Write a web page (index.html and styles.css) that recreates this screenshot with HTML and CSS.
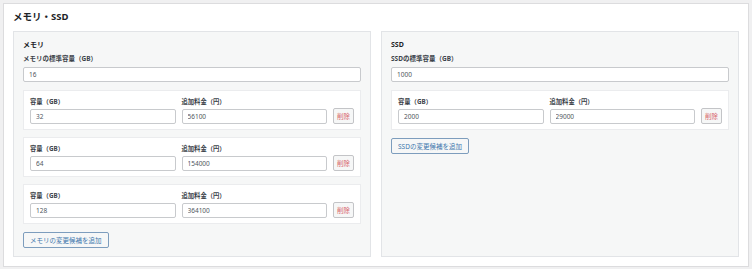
FILE: index.html
```html
<!DOCTYPE html>
<html lang="ja">
<head>
    <meta charset="UTF-8">
    <title>メモリ・SSD</title>
    <link rel="stylesheet" href="styles.css">
</head>
<body>
    <section class="postbox">
        <h2 class="postbox-title">メモリ・SSD</h2>

        <div class="panels">
            <div class="panel">
                <h3 class="panel-title">メモリ</h3>
                <label class="field-label" for="mem-default">メモリの標準容量（GB）</label>
                <input class="text-input" id="mem-default" type="text" value="16">

                <div class="option-list">
                    <div class="option-row">
                        <div class="field">
                            <label class="field-label">容量（GB）</label>
                            <input class="text-input" type="text" value="32">
                        </div>
                        <div class="field">
                            <label class="field-label">追加料金（円）</label>
                            <input class="text-input" type="text" value="56100">
                        </div>
                        <button class="btn-delete" type="button">削除</button>
                    </div>
                    <div class="option-row">
                        <div class="field">
                            <label class="field-label">容量（GB）</label>
                            <input class="text-input" type="text" value="64">
                        </div>
                        <div class="field">
                            <label class="field-label">追加料金（円）</label>
                            <input class="text-input" type="text" value="154000">
                        </div>
                        <button class="btn-delete" type="button">削除</button>
                    </div>
                    <div class="option-row">
                        <div class="field">
                            <label class="field-label">容量（GB）</label>
                            <input class="text-input" type="text" value="128">
                        </div>
                        <div class="field">
                            <label class="field-label">追加料金（円）</label>
                            <input class="text-input" type="text" value="364100">
                        </div>
                        <button class="btn-delete" type="button">削除</button>
                    </div>
                </div>

                <button class="btn-add" type="button">メモリの変更候補を追加</button>
            </div>

            <div class="panel">
                <h3 class="panel-title">SSD</h3>
                <label class="field-label" for="ssd-default">SSDの標準容量（GB）</label>
                <input class="text-input" id="ssd-default" type="text" value="1000">

                <div class="option-list">
                    <div class="option-row">
                        <div class="field">
                            <label class="field-label">容量（GB）</label>
                            <input class="text-input" type="text" value="2000">
                        </div>
                        <div class="field">
                            <label class="field-label">追加料金（円）</label>
                            <input class="text-input" type="text" value="29000">
                        </div>
                        <button class="btn-delete" type="button">削除</button>
                    </div>
                </div>

                <button class="btn-add" type="button">SSDの変更候補を追加</button>
            </div>
        </div>
    </section>
</body>
</html>
```

FILE: styles.css
```css
:root {
    --page-bg: #f0f0f1;
    --card-border: #dcdcde;
    --panel-bg: #f6f7f7;
    --panel-border: #e2e4e7;
    --row-border: #ebecee;
    --input-border: #c8cacd;
    --text-dark: #1d2327;
    --text-label: #3c434a;
    --text-value: #50575e;
    --blue: #3f78ad;
    --red: #d6636a;
}

* {
    margin: 0;
    padding: 0;
    box-sizing: border-box;
}

body {
    font-family: "Noto Sans", "Noto Sans CJK JP", sans-serif;
    background: var(--page-bg);
    color: var(--text-dark);
    padding: 3px 3px 0 3px;
}

.postbox {
    background: #fff;
    border: 1px solid var(--card-border);
    height: 264px;
    padding: 6px 9px 9px 9px;
}

.postbox-title {
    font-size: 9.5px;
    font-weight: 700;
    line-height: 14px;
    margin-bottom: 7px;
}

.panels {
    display: grid;
    grid-template-columns: 1fr 1fr;
    column-gap: 10px;
    align-items: stretch;
}

.panel {
    background: var(--panel-bg);
    border: 1px solid var(--panel-border);
    padding: 8px 9px 8px 9px;
    display: flex;
    flex-direction: column;
    align-items: stretch;
}

.panel-title {
    font-size: 7px;
    font-weight: 700;
    line-height: 10px;
    margin-bottom: 4px;
}

.field-label {
    display: block;
    font-size: 6.5px;
    font-weight: 700;
    line-height: 10px;
    color: var(--text-label);
    margin-bottom: 3px;
}

.text-input {
    display: block;
    width: 100%;
    height: 15px;
    padding: 0 5px;
    background: #fff;
    border: 1px solid var(--input-border);
    border-radius: 2px;
    font-family: inherit;
    font-size: 6.5px;
    color: var(--text-value);
    outline: none;
}

.option-list {
    display: flex;
    flex-direction: column;
    gap: 7px;
    margin-top: 8px;
}

.option-row {
    display: grid;
    grid-template-columns: 1fr 1fr auto;
    column-gap: 6px;
    align-items: end;
    height: 40px;
    padding: 5px 6px 5px 6px;
    background: #fff;
    border: 1px solid var(--row-border);
}

.option-row .field-label {
    line-height: 11px;
    margin-bottom: 2px;
    font-size: 6.3px;
}

.btn-delete {
    width: 21px;
    height: 16px;
    margin-bottom: 0;
    background: var(--panel-bg);
    border: 1px solid #c3c4c7;
    border-radius: 2px;
    color: var(--red);
    font-family: inherit;
    font-size: 6.5px;
    cursor: pointer;
}

.btn-add {
    align-self: flex-start;
    margin-top: 8px;
    height: 16px;
    padding: 0 6px;
    background: var(--panel-bg);
    border: 1px solid #7d9dbd;
    border-radius: 2px;
    color: var(--blue);
    font-family: inherit;
    font-size: 6.5px;
    cursor: pointer;
}
```
